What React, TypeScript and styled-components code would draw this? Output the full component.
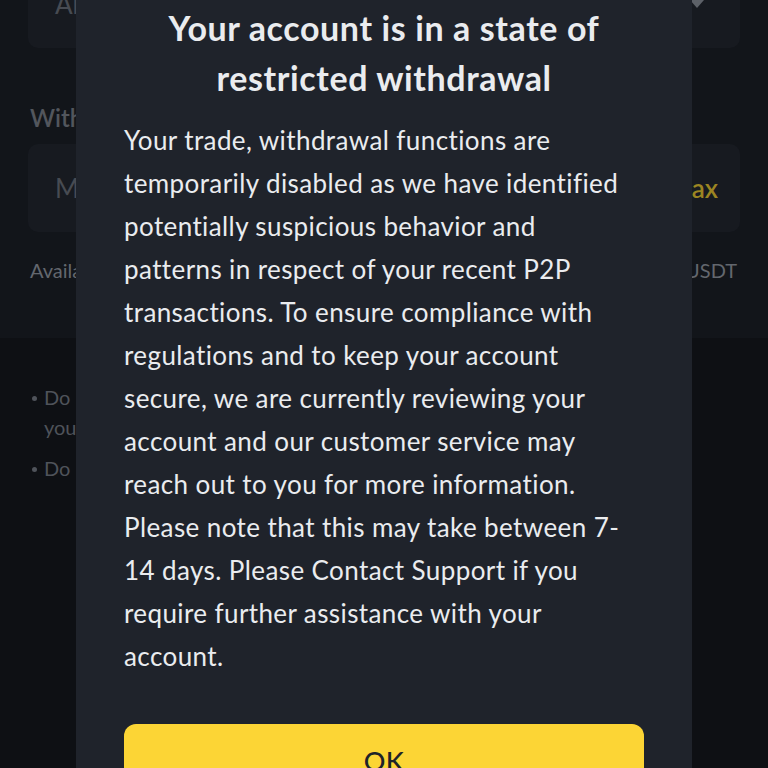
import React from "react";
import styled, { createGlobalStyle } from "styled-components";

const Global = createGlobalStyle`
  html, body { margin: 0; padding: 0; background: #0e1014; }
  body { font-family: "Lato", "Noto Sans", sans-serif; overflow: hidden; }
  * { box-sizing: border-box; }
`;

const Page = styled.div`
  width: 768px;
  height: 768px;
  position: relative;
  overflow: hidden;
  background: #0e1014;
`;

const FormSection = styled.div`
  background: #12151a;
  padding: 0 28px 0 28px;
  height: 338px;
  display: flex;
  flex-direction: column;
`;

const Field = styled.div<{ $h: number; $top?: number }>`
  height: ${(p) => p.$h}px;
  margin-top: ${(p) => p.$top ?? 0}px;
  background: #171a20;
  border-radius: 10px;
  display: flex;
  align-items: center;
  justify-content: space-between;
  padding: 0 22px 0 27px;
  position: relative;
`;

const Placeholder = styled.span`
  color: #474b52;
  font-size: 26px;
`;

const Caret = styled.span`
  position: absolute;
  right: 36px;
  top: 40px;
  width: 0;
  height: 0;
  border-left: 7px solid transparent;
  border-right: 7px solid transparent;
  border-top: 8px solid #5d6168;
`;

const MaxLink = styled.span`
  color: #9c8522;
  font-size: 26px;
  font-weight: 600;
`;

const Label = styled.div`
  color: #52565d;
  font-size: 24px;
  font-weight: 600;
  margin-top: 55px;
  padding-left: 2px;
`;

const AvailRow = styled.div`
  display: flex;
  justify-content: space-between;
  margin-top: 26px;
  color: #63676e;
  font-size: 20px;
  padding: 0 3px 0 2px;
`;

const Notes = styled.ul`
  list-style: none;
  margin: 0;
  padding: 44px 40px 0 30px;
  color: #4f535a;
  font-size: 20px;
  line-height: 30px;
`;

const Note = styled.li<{ $gap?: number }>`
  position: relative;
  padding-left: 14px;
  margin-top: ${(p) => p.$gap ?? 0}px;
  &::before {
    content: "";
    position: absolute;
    left: 2px;
    top: 14px;
    width: 5px;
    height: 5px;
    border-radius: 50%;
    background: #4f535a;
  }
`;

const Modal = styled.div`
  position: absolute;
  left: 76px;
  top: -45px;
  width: 616px;
  background: #1f232b;
  border-radius: 16px;
  padding: 48px;
  display: flex;
  flex-direction: column;
`;

const Title = styled.h2`
  margin: 0;
  text-align: center;
  color: #eaecef;
  font-size: 34px;
  line-height: 50px;
  font-weight: 700;
  letter-spacing: 0.6px;
  white-space: nowrap;
`;

const Body = styled.p`
  margin: 16px 0 0 0;
  color: #eaecef;
  font-size: 26px;
  line-height: 43px;
  font-weight: 400;
  letter-spacing: 0.4px;
  white-space: nowrap;
`;

const OkButton = styled.button`
  margin-top: 46px;
  height: 72px;
  border: none;
  border-radius: 12px;
  background: #fcd535;
  color: #1e2329;
  font-family: inherit;
  font-size: 27px;
  font-weight: 500;
  letter-spacing: 0.4px;
`;

const lines = [
  "Your trade, withdrawal functions are",
  "temporarily disabled as we have identified",
  "potentially suspicious behavior and",
  "patterns in respect of your recent P2P",
  "transactions. To ensure compliance with",
  "regulations and to keep your account",
  "secure, we are currently reviewing your",
  "account and our customer service may",
  "reach out to you for more information.",
  "Please note that this may take between 7-",
  "14 days. Please Contact Support if you",
  "require further assistance with your",
  "account.",
];

export default function App() {
  return (
    <Page>
      <Global />
      <FormSection>
        <Field $h={88} $top={-40}>
          <Placeholder>All networks</Placeholder>
          <Caret />
        </Field>
        <Label>Withdrawal Amount</Label>
        <Field $h={88} $top={12}>
          <Placeholder>Minimum 10</Placeholder>
          <MaxLink>Max</MaxLink>
        </Field>
        <AvailRow>
          <span>Available</span>
          <span>0.00 USDT</span>
        </AvailRow>
      </FormSection>
      <Notes>
        <Note>
          Do not withdraw directly to a crowdfund or ICO. We will not credit
          <br />
          your account with tokens from that sale.
        </Note>
        <Note $gap={11}>Do not transact with Sanctioned Entities.</Note>
      </Notes>
      <Modal>
        <Title>
          Your account is in a state of
          <br />
          restricted withdrawal
        </Title>
        <Body>
          {lines.map((l, i) => (
            <React.Fragment key={i}>
              {l}
              {i < lines.length - 1 && <br />}
            </React.Fragment>
          ))}
        </Body>
        <OkButton>OK</OkButton>
      </Modal>
    </Page>
  );
}
